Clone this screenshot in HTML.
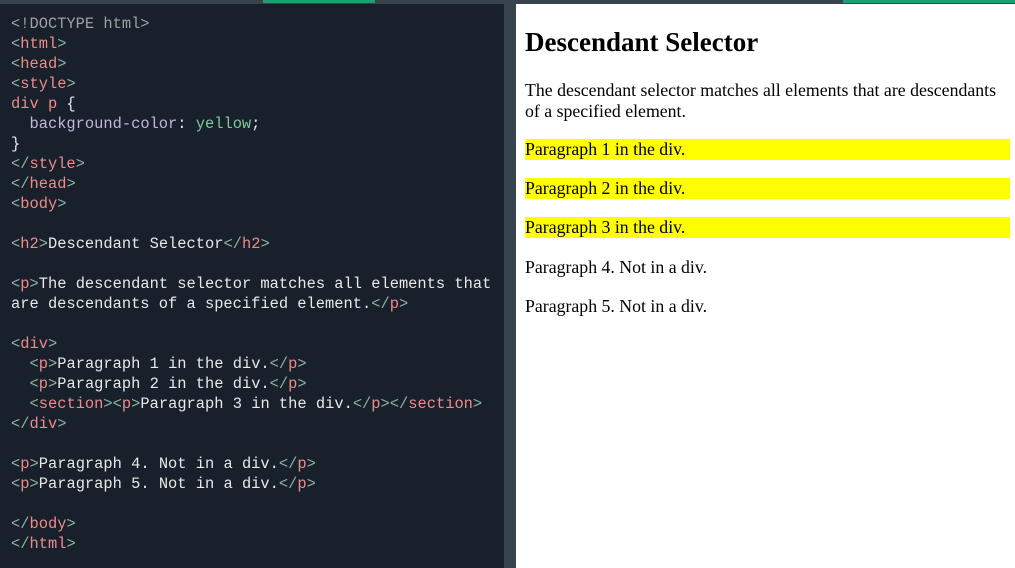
<!DOCTYPE html>
<html><head><style>
body{margin:0;width:1015px;height:568px;background:#38444d;position:relative;overflow:hidden}
.g1{position:absolute;top:0;height:3px;background:#1f9e6f}
#code{position:absolute;left:0;top:4px;width:504px;height:564px;background:#18202b;}
pre{margin:0;position:absolute;left:11px;top:10px;font-family:"Liberation Mono",monospace;font-size:15.4px;line-height:20px;color:#e8e8e8}
.b{color:#8fb0a0}.t{color:#f08a8a}.d{color:#a0a0a0}.pr{color:#c3b5dc}.v{color:#7ec99a}
#out{position:absolute;left:516px;top:4px;width:499px;height:564px;background:#fff;font-family:"Liberation Serif",serif;color:#000}
.a{position:absolute;left:9px;margin:0;white-space:nowrap}
h2{font-size:27px;top:23px}
.p{font-size:17.8px;line-height:21px}
.y{background:#ff0;width:485px;left:9px;height:21px}
</style></head><body>
<div class="g1" style="left:263px;width:112px"></div>
<div class="g1" style="left:843px;width:172px"></div>
<div id="code"><pre><span class="d">&lt;!DOCTYPE html&gt;</span>
<span class="b">&lt;</span><span class="t">html</span><span class="b">&gt;</span>
<span class="b">&lt;</span><span class="t">head</span><span class="b">&gt;</span>
<span class="b">&lt;</span><span class="t">style</span><span class="b">&gt;</span>
<span class="t">div p</span> {
  <span class="pr">background-color</span>: <span class="v">yellow</span>;
}
<span class="b">&lt;/</span><span class="t">style</span><span class="b">&gt;</span>
<span class="b">&lt;/</span><span class="t">head</span><span class="b">&gt;</span>
<span class="b">&lt;</span><span class="t">body</span><span class="b">&gt;</span>

<span class="b">&lt;</span><span class="t">h2</span><span class="b">&gt;</span>Descendant Selector<span class="b">&lt;/</span><span class="t">h2</span><span class="b">&gt;</span>

<span class="b">&lt;</span><span class="t">p</span><span class="b">&gt;</span>The descendant selector matches all elements that
are descendants of a specified element.<span class="b">&lt;/</span><span class="t">p</span><span class="b">&gt;</span>

<span class="b">&lt;</span><span class="t">div</span><span class="b">&gt;</span>
  <span class="b">&lt;</span><span class="t">p</span><span class="b">&gt;</span>Paragraph 1 in the div.<span class="b">&lt;/</span><span class="t">p</span><span class="b">&gt;</span>
  <span class="b">&lt;</span><span class="t">p</span><span class="b">&gt;</span>Paragraph 2 in the div.<span class="b">&lt;/</span><span class="t">p</span><span class="b">&gt;</span>
  <span class="b">&lt;</span><span class="t">section</span><span class="b">&gt;&lt;</span><span class="t">p</span><span class="b">&gt;</span>Paragraph 3 in the div.<span class="b">&lt;/</span><span class="t">p</span><span class="b">&gt;&lt;/</span><span class="t">section</span><span class="b">&gt;</span>
<span class="b">&lt;/</span><span class="t">div</span><span class="b">&gt;</span>

<span class="b">&lt;</span><span class="t">p</span><span class="b">&gt;</span>Paragraph 4. Not in a div.<span class="b">&lt;/</span><span class="t">p</span><span class="b">&gt;</span>
<span class="b">&lt;</span><span class="t">p</span><span class="b">&gt;</span>Paragraph 5. Not in a div.<span class="b">&lt;/</span><span class="t">p</span><span class="b">&gt;</span>

<span class="b">&lt;/</span><span class="t">body</span><span class="b">&gt;</span>
<span class="b">&lt;/</span><span class="t">html</span><span class="b">&gt;</span></pre></div>
<div id="out">
<h2 class="a">Descendant Selector</h2>
<div class="a p" style="top:76px">The descendant selector matches all elements that are descendants<br>of a specified element.</div>
<div class="a p y" style="top:135px">Paragraph 1 in the div.</div>
<div class="a p y" style="top:174px">Paragraph 2 in the div.</div>
<div class="a p y" style="top:213px">Paragraph 3 in the div.</div>
<div class="a p" style="top:253px">Paragraph 4. Not in a div.</div>
<div class="a p" style="top:292px">Paragraph 5. Not in a div.</div>
</div>
</body></html>
